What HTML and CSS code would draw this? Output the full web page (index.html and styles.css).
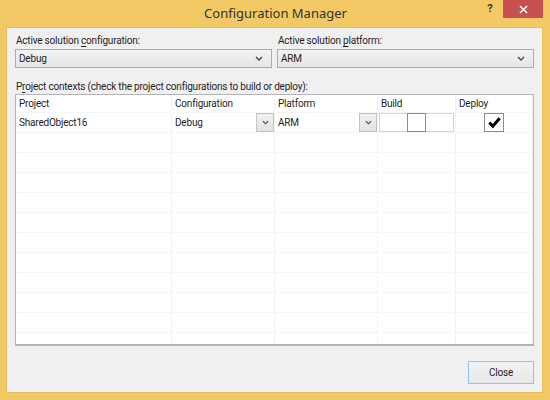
FILE: index.html
```html
<!DOCTYPE html>
<html lang="en">
<head>
  <meta charset="UTF-8" />
  <title>Configuration Manager</title>
  <link rel="stylesheet" href="styles.css">
</head>
<body>
  <div class="window">
    <div class="titlebar">
      <span></span>
      <span class="title">Configuration Manager</span>
      <div class="caption-buttons">
        <span class="help-btn">?</span>
        <span class="close-btn">
          <svg viewBox="0 0 10 10" width="9" height="9">
            <path d="M1 1 L9 9 M9 1 L1 9" stroke="#fff" stroke-width="1.6" fill="none"/>
          </svg>
        </span>
      </div>
    </div>

    <div class="client">
      <div class="solution-row">
        <div class="field">
          <label>Active solution <u>c</u>onfiguration:</label>
          <div class="select">
            <span>Debug</span>
            <svg class="chevron" viewBox="0 0 8 5" width="8" height="5"><path d="M1 1 L4 4 L7 1" stroke="#444" stroke-width="1.3" fill="none"/></svg>
          </div>
        </div>
        <div class="field">
          <label>Active solution <u>p</u>latform:</label>
          <div class="select">
            <span>ARM</span>
            <svg class="chevron" viewBox="0 0 8 5" width="8" height="5"><path d="M1 1 L4 4 L7 1" stroke="#444" stroke-width="1.3" fill="none"/></svg>
          </div>
        </div>
      </div>

      <label class="contexts-label">P<u>r</u>oject contexts (check the project configurations to build or deploy):</label>

      <div class="grid">
        <div class="cell head">Project</div>
        <div class="cell head">Configuration</div>
        <div class="cell head">Platform</div>
        <div class="cell head">Build</div>
        <div class="cell head">Deploy</div>

        <div class="cell">SharedObject16</div>
        <div class="cell combo">
          <span>Debug</span>
          <span class="drop"><svg viewBox="0 0 8 5" width="7" height="5"><path d="M1 1 L4 4 L7 1" stroke="#444" stroke-width="1.3" fill="none"/></svg></span>
        </div>
        <div class="cell combo">
          <span>ARM</span>
          <span class="drop"><svg viewBox="0 0 8 5" width="7" height="5"><path d="M1 1 L4 4 L7 1" stroke="#444" stroke-width="1.3" fill="none"/></svg></span>
        </div>
        <div class="cell check-cell">
          <div class="build-box"><span class="build-check"></span></div>
        </div>
        <div class="cell check-cell">
          <span class="deploy-check">
            <svg viewBox="0 0 16 16" width="15" height="15"><path d="M2.5 8 L6.2 12 L13.5 3.5" stroke="#000" stroke-width="3.2" fill="none"/></svg>
          </span>
        </div>
      </div>

      <div class="footer">
        <button class="close-button">Close</button>
      </div>
    </div>
  </div>

  <script>
    // empty rows to fill the grid
    const grid = document.querySelector('.grid');
    for (let i = 0; i < 11; i++) {
      for (let c = 0; c < 5; c++) {
        const cell = document.createElement('div');
        cell.className = 'cell';
        grid.appendChild(cell);
      }
    }
  </script>
</body>
</html>
```

FILE: styles.css
```css
html, body {
  margin: 0;
  padding: 0;
  background: #f2c964;
  font-family: 'Roboto', 'Noto Sans', sans-serif;
  font-size: 10px;
  letter-spacing: -0.2px;
  color: #1e1e1e;
}
.window {
  width: 550px;
  height: 400px;
  box-sizing: border-box;
  padding: 0 7px 7px 6px;
  background: #f2c964;
  display: flex;
  flex-direction: column;
}
.titlebar {
  height: 27px;
  display: grid;
  grid-template-columns: 1fr auto 1fr;
  align-items: start;
  flex-shrink: 0;
}
.title {
  font-family: 'Noto Sans', sans-serif;
  font-size: 13px;
  letter-spacing: 0;
  color: #333;
  line-height: 27px;
  padding-left: 2px;
}
.caption-buttons {
  justify-self: end;
  display: flex;
}
.help-btn {
  width: 26px;
  height: 18px;
  line-height: 18px;
  text-align: center;
  font-weight: bold;
  font-size: 11px;
  color: #333;
}
.close-btn {
  width: 40px;
  height: 18px;
  background: #c75050;
  display: flex;
  align-items: center;
  justify-content: center;
}
.client {
  flex: 1;
  background: #f0f0f0;
  border: 1px solid #e2bd62;
  padding: 5px 8px 7px 8px;
  display: flex;
  flex-direction: column;
}
.solution-row {
  display: flex;
  gap: 5px;
}
.field {
  flex: 1;
  display: flex;
  flex-direction: column;
}
.field label {
  padding-left: 1px;
  line-height: 16px;
  margin-bottom: 0;
}
u {
  text-decoration-thickness: 1px;
  text-underline-offset: 2px;
}
.select {
  height: 19px;
  box-sizing: border-box;
  border: 1px solid #acacac;
  background: linear-gradient(#f2f2f2, #e6e6e6);
  display: flex;
  align-items: center;
  justify-content: space-between;
  padding: 0 8px 0 3px;
}
.contexts-label {
  margin-top: 11px;
  padding-left: 1px;
  line-height: 15px;
  margin-bottom: 0;
}
.grid {
  height: 252px;
  flex-shrink: 0;
  box-sizing: border-box;
  border: 1px solid #b4b4b4;
  border-bottom-width: 2px;
  background: #fff;
  display: grid;
  grid-template-columns: 156px 103px 103px 78px 77px;
  grid-auto-rows: 20px;
  grid-template-rows: 18px;
  overflow: hidden;
}
.cell {
  border-right: 1px solid #f2f2f2;
  border-bottom: 1px solid #f5f5f5;
  padding-left: 3px;
  line-height: 19px;
  white-space: nowrap;
  overflow: hidden;
}
.cell.head {
  line-height: 17px;
}
.combo {
  display: flex;
  justify-content: space-between;
  align-items: stretch;
}
.drop {
  width: 18px;
  border: 1px solid #c4c4c4;
  background: linear-gradient(#f0f0f0, #e2e2e2);
  display: flex;
  align-items: center;
  justify-content: center;
  box-sizing: border-box;
}
.check-cell {
  padding: 0;
  display: flex;
  justify-content: center;
  align-items: stretch;
}
.build-box {
  width: 75px;
  box-sizing: border-box;
  border: 1px solid #d4d4d4;
  display: flex;
  justify-content: center;
}
.build-check {
  width: 19px;
  box-sizing: border-box;
  border: 1px solid #8c8c8c;
  margin: -1px 0;
}
.deploy-check {
  width: 20px;
  box-sizing: border-box;
  border: 1px solid #8c8c8c;
  display: flex;
  align-items: center;
  justify-content: center;
}
.footer {
  display: flex;
  justify-content: flex-end;
  margin-top: 15px;
}
.close-button {
  width: 66px;
  height: 23px;
  border: 1px solid #8fc3ef;
  background: linear-gradient(#f3f3f3, #e7e7e7);
  font-family: inherit;
  font-size: 10px;
  letter-spacing: inherit;
  color: #1e1e1e;
  padding: 0;
}
```
